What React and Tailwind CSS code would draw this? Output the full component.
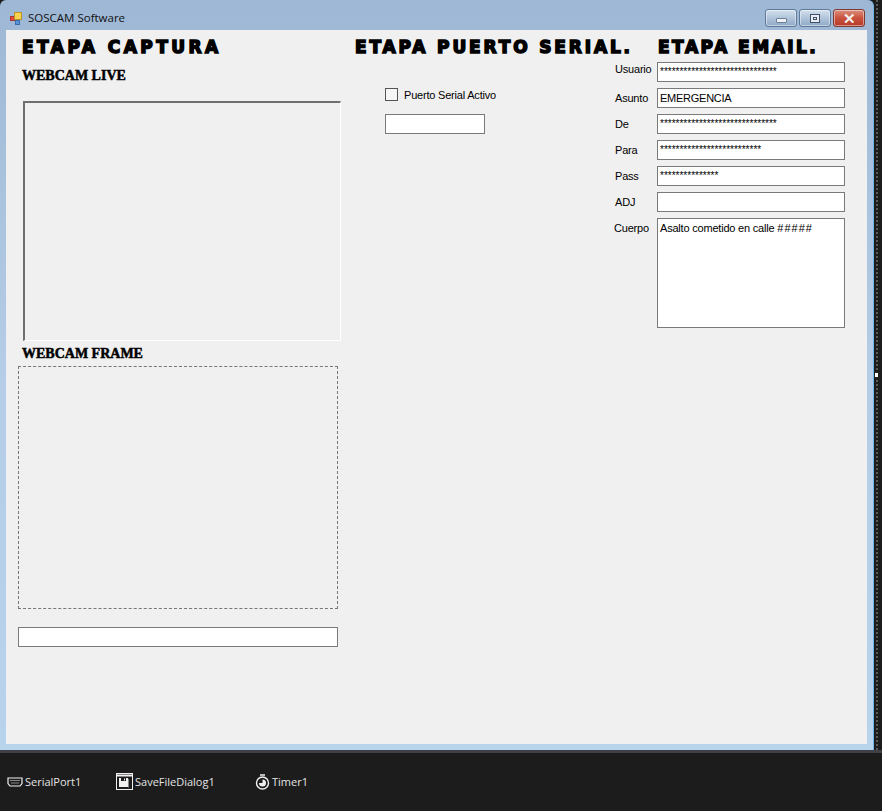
const win = "font-['Liberation_Sans',Arial,sans-serif] text-[11px] text-black"
const pixelTitle = "h-4 leading-4 whitespace-nowrap font-['DejaVu_Sans',sans-serif] font-bold text-[17px] text-black [-webkit-text-stroke:1.5px_#000]"
const stencilTitle = "whitespace-nowrap font-['Liberation_Serif',serif] font-bold text-[14px] text-black [-webkit-text-stroke:0.5px_#000]"
const field = "h-5 leading-[18px] border border-[#7a7a7a] bg-white px-[2px] overflow-hidden whitespace-nowrap"

const emailFields = [
  { label: 'Usuario', value: '******************************', up: true },
  { label: 'Asunto', value: 'EMERGENCIA' },
  { label: 'De', value: '******************************', up: true },
  { label: 'Para', value: '**************************', up: true },
  { label: 'Pass', value: '***************', up: true },
  { label: 'ADJ', value: '' },
]

function AppIcon() {
  return (
    <svg width="13" height="13" viewBox="0 0 13 13">
      <rect x="0.5" y="4.5" width="4" height="4" fill="#e8483a" stroke="#a33" />
      <rect x="4.5" y="0.5" width="7" height="7" fill="#f6d450" stroke="#b8912c" />
      <rect x="5.5" y="8.5" width="4" height="4" fill="#5b93dc" stroke="#3a6aa8" />
    </svg>
  )
}

function CaptionButton({ children, className }) {
  return (
    <div className={`h-[18px] w-8 rounded-[3px] border border-[#5f7a98] flex items-center justify-center shadow-[inset_0_0_0_1px_rgba(255,255,255,0.45)] ${className}`}>
      {children}
    </div>
  )
}

function SerialIcon() {
  return (
    <svg width="16" height="10" viewBox="0 0 16 10" fill="none">
      <path d="M1 1h14v5.5L13 9H3L1 6.5z" stroke="#f0f0f0" strokeWidth="1.2" />
      <path d="M3.5 3.5h9M4.5 6h7" stroke="#f0f0f0" strokeDasharray="1 1" />
    </svg>
  )
}

function SaveDialogIcon() {
  return (
    <svg width="17" height="17" viewBox="0 0 17 17" fill="none">
      <rect x="0.5" y="0.5" width="16" height="16" stroke="#f0f0f0" />
      <path d="M0.5 2.5h16" stroke="#f0f0f0" strokeWidth="2" />
      <path d="M3 5h9v9H3z" fill="#f0f0f0" />
      <path d="M5 5h5v3H5z" fill="#1c1c1c" />
      <path d="M8 5.5h1v2H8z" fill="#f0f0f0" />
      <path d="M12.5 14.5V6" stroke="#888" />
    </svg>
  )
}

function TimerIcon() {
  return (
    <svg width="15" height="16" viewBox="0 0 15 16" fill="none">
      <path d="M5 1h5" stroke="#f0f0f0" strokeWidth="1.5" />
      <circle cx="7.5" cy="9" r="6" stroke="#f0f0f0" strokeWidth="1.4" />
      <path d="M7.5 9V5.5A3.5 3.5 0 1 1 4 9z" fill="#f0f0f0" />
    </svg>
  )
}

function TrayItem({ icon, label, className }) {
  return (
    <div className={`flex items-center gap-[2px] ${className}`}>
      {icon}
      <span className="font-['Open_Sans',sans-serif] text-[11px] leading-4 mt-[1px] text-[#e4e4e4]">{label}</span>
    </div>
  )
}

export default function App() {
  return (
    <div className={`w-[882px] h-[811px] overflow-hidden bg-[#1c1c1c] flex flex-col ${win}`}>
      <div className="flex h-[750px]">
        <div className="w-[874px] h-full rounded-t-[6px] bg-gradient-to-b from-[#9db7d5] via-[#b5cde6] to-[#b8d3ec] border-r border-[#6fb4e8] pl-[6px] pr-[6px] flex flex-col">
          <div className="h-[30px] flex items-center">
            <div className="ml-1 mt-[6px] flex items-center gap-[5px]">
              <AppIcon />
              <span className="font-['Open_Sans',sans-serif] text-[11.5px] text-[#111]">SOSCAM Software</span>
            </div>
            <div className="ml-auto mr-[2px] mt-[6px] flex gap-[2px]">
              <CaptionButton className="bg-gradient-to-b from-[#d3e0ee] to-[#8fa9c6]">
                <div className="w-[11px] h-[5px] mt-[5px] rounded-[1px] bg-[#eef2f6] border border-[#6a7f98]" />
              </CaptionButton>
              <CaptionButton className="bg-gradient-to-b from-[#d3e0ee] to-[#8fa9c6]">
                <div className="w-[10px] h-[9px] border border-[#3f5068] bg-[#e9eef4] flex items-center justify-center">
                  <div className="w-1 h-[3px] border border-[#3f5068]" />
                </div>
              </CaptionButton>
              <CaptionButton className="bg-gradient-to-b from-[#dc8f7e] via-[#c9523d] to-[#b7392a] border-[#7c3a30]">
                <span className="font-['Liberation_Sans',sans-serif] font-bold text-[15px] leading-none text-[#f4f0ee]">✕</span>
              </CaptionButton>
            </div>
          </div>

          <div className="h-[714px] bg-[#f0f0f0] pl-3 flex">
            <div className="w-[323px] pt-2">
              <h1 className={`${pixelTitle} ml-1 mt-[1px] tracking-[3.45px]`}>ETAPA CAPTURA</h1>
              <h2 className={`${stencilTitle} ml-1 mt-[13px] h-4 leading-4`}>WEBCAM LIVE</h2>
              <div className="ml-[5px] mt-[17px] w-[318px] h-[240px] border-2 border-t-[#6f6f6f] border-l-[#6f6f6f] border-r-white border-b-white border-r-[1px] border-b-[1px]" />
              <h2 className={`${stencilTitle} ml-1 mt-[6px] h-[14px] leading-[14px]`}>WEBCAM FRAME</h2>
              <div className="mt-[5px] w-[320px] h-[243px] border border-dashed border-[#777]" />
              <div className={`${field} mt-[18px] w-[320px]`} />
            </div>

            <div className="ml-[14px] w-[260px] pt-2">
              <h1 className={`${pixelTitle} mt-[1px] tracking-[2.85px]`}>ETAPA PUERTO SERIAL.</h1>
              <div className="ml-[30px] mt-[33px] flex items-center gap-[6px] h-[13px]">
                <div className="w-[13px] h-[13px] border border-[#555] bg-[#f6f6f6]" />
                <span className="tracking-[-0.2px] mt-[1px]">Puerto Serial Activo</span>
              </div>
              <div className={`${field} ml-[30px] mt-[13px] w-[100px]`} />
            </div>

            <div className="w-[230px] pt-2">
              <h1 className={`${pixelTitle} ml-[43px] mt-[1px] tracking-[2.5px]`}>ETAPA EMAIL.</h1>
              <div className="mt-[7px] flex flex-col gap-[6px]">
                {emailFields.map(f => (
                  <div key={f.label} className="flex h-5">
                    <span className={`w-[42px] leading-5 tracking-[-0.2px] ${f.label === 'Usuario' ? '-mt-[3px]' : ''}`}>{f.label}</span>
                    <div className={`${field} w-[188px] ${f.up ? 'text-[10px]' : 'tracking-[-0.25px]'}`}>{f.value}</div>
                  </div>
                ))}
                <div className="flex">
                  <span className="w-[42px] leading-5 -ml-px tracking-[-0.2px]">Cuerpo</span>
                  <div className="w-[188px] h-[110px] ml-px border border-[#7a7a7a] bg-white px-[2px] leading-[18px] tracking-[-0.2px]">Asalto cometido en calle <span className="tracking-[1px]">#####</span></div>
                </div>
              </div>
            </div>
          </div>
        </div>

        <div className="relative w-2">
          <div className="ml-[2px] h-full border-l-2 border-dotted border-[#5a5a5a]" />
          <div className="absolute left-0 top-[372px] w-[5px] h-[6px] bg-white border border-[#222]" />
        </div>
      </div>

      <div className="flex-1 border-t-[3px] border-[#3f3f46] flex items-center pl-[7px] pb-[1px]">
        <TrayItem icon={<SerialIcon />} label="SerialPort1" className="w-[109px]" />
        <TrayItem icon={<SaveDialogIcon />} label="SaveFileDialog1" className="w-[139px]" />
        <TrayItem icon={<TimerIcon />} label="Timer1" />
      </div>
    </div>
  )
}
